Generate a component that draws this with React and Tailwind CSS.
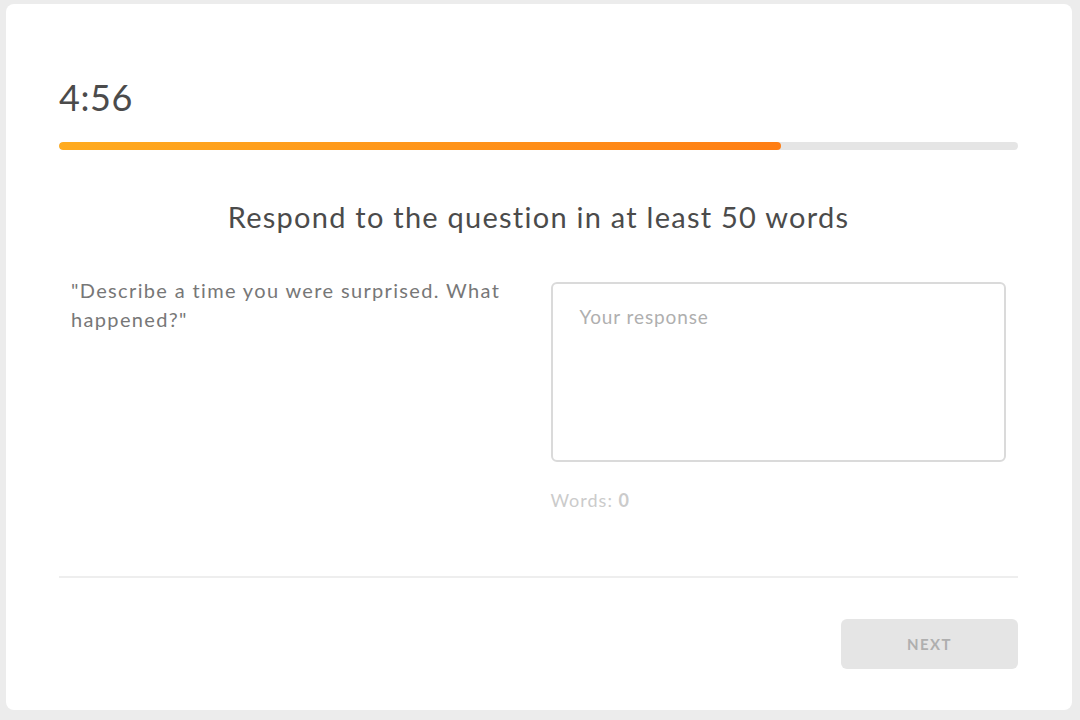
export default function App() {
  return (
    <div
      className="w-full h-[720px] bg-[#ececec] pt-[4px] pl-[6px] pr-[8px] pb-[10px]"
      style={{ fontFamily: "Lato, 'Open Sans', sans-serif" }}
    >
      <div className="h-full bg-white rounded-[8px] pl-[53px] pr-[54px] pt-[71px] flex flex-col">
        <div className="text-[36px] leading-[44px] tracking-[0.6px] text-[#4b4b4b]">4:56</div>
        <div className="mt-[23px] h-2 rounded-full bg-[#e5e5e5] overflow-hidden">
          <div className="h-full w-[75.3%] rounded-full bg-gradient-to-r from-[#ffab1f] to-[#ff7e14]" />
        </div>
        <h1 className="mt-[50px] text-center text-[29px] leading-[34px] tracking-[1.25px] text-[#4b4b4b]">
          Respond to the question in at least 50 words
        </h1>
        <div className="mt-[42px] grid grid-cols-2">
          <div className="px-3">
            <p className="text-[20px] leading-[29px] tracking-[1.35px] text-[#777777]">
              "Describe a time you were surprised. What happened?"
            </p>
          </div>
          <div className="px-3 pt-[6px]">
            <textarea
              placeholder="Your response"
              className="block w-full h-[180px] resize-none rounded-[6px] border-2 border-[#dadada] bg-white px-[27px] py-[21px] text-[19px] leading-[24px] tracking-[0.9px] text-[#4b4b4b] placeholder:text-[#afafaf] outline-none"
            />
            <div className="mt-[26px] text-[18px] leading-[24px] tracking-[1px] text-[#cbcbcb]">
              Words: <span className="font-bold">0</span>
            </div>
          </div>
        </div>
        <div className="mt-[64px] h-[2px] bg-[#eeeeee]" />
        <div className="mt-[41px] flex justify-end">
          <button className="w-[177px] h-[50px] rounded-[6px] bg-[#e5e5e5] text-[15px] font-bold tracking-[1.5px] text-[#afafaf]">
            NEXT
          </button>
        </div>
      </div>
    </div>
  );
}
